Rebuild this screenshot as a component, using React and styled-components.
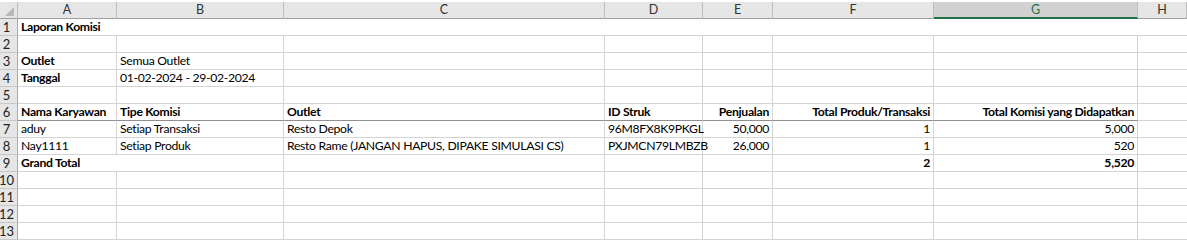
import React from "react";
import styled, { createGlobalStyle } from "styled-components";

const GlobalStyle = createGlobalStyle`
  html, body {
    margin: 0;
    padding: 0;
    background: #ffffff;
  }
  body {
    font-family: Lato, "Liberation Sans", sans-serif;
    font-size: 13px;
    color: #000;
  }
`;

const COLS = ["A", "B", "C", "D", "E", "F", "G", "H"];
const SELECTED_COL = "G";

const Sheet = styled.div`
  display: grid;
  grid-template-columns: 18px 99px 167px 321px 98px 70px 161px 204px 1fr;
  grid-template-rows: 19px repeat(13, 17px);
  width: 1187px;
  height: 241px;
  overflow: hidden;
  background: #fff;
`;

const Corner = styled.div`
  position: relative;
  margin-top: 2px;
  background: #e6e6e6;
  border-right: 1px solid #bdbdbd;
  border-bottom: 1px solid #9e9e9e;
  &::after {
    content: "";
    position: absolute;
    right: 3px;
    bottom: 2px;
    width: 0;
    height: 0;
    border-left: 9px solid transparent;
    border-bottom: 9px solid #b8b8b8;
  }
`;

const ColHead = styled.div`
  margin-top: 2px;
  display: flex;
  align-items: center;
  justify-content: center;
  background: ${(p) => (p.$selected ? "#d2d2d2" : "#e6e6e6")};
  border-right: 1px solid #bdbdbd;
  border-bottom: ${(p) => (p.$selected ? "2px solid #217346" : "1px solid #9e9e9e")};
  color: ${(p) => (p.$selected ? "#217346" : "#333")};
  font-size: 12.5px;
  line-height: 1;
  padding-top: 1px;
`;

const RowHead = styled.div`
  display: flex;
  align-items: center;
  justify-content: center;
  padding-right: 4px;
  background: #e6e6e6;
  border-right: 1px solid #ababab;
  border-bottom: 1px solid #c8c8c8;
  color: #222;
  font-size: 13px;
`;

const Cell = styled.div`
  display: flex;
  align-items: center;
  justify-content: ${(p) => (p.$align === "right" ? "flex-end" : "flex-start")};
  padding: 0 3px;
  white-space: nowrap;
  overflow: visible;
  grid-column: ${(p) => (p.$span ? `span ${p.$span}` : "auto")};
  border-right: ${(p) => (p.$noRight ? "none" : "1px solid #d4d4d4")};
  border-bottom: 1px solid ${(p) => (p.$head ? "#8f8f8f" : "#d4d4d4")};
  font-size: 12.2px;
  letter-spacing: -0.3px;
  font-weight: ${(p) => (p.$bold ? 700 : 400)};
  line-height: 1;
`;

const rows = [
  [{ v: "Laporan Komisi", bold: true, span: 8 }],
  [],
  [{ v: "Outlet", bold: true }, { v: "Semua Outlet" }],
  [{ v: "Tanggal", bold: true }, { v: "01-02-2024 - 29-02-2024" }],
  [],
  [
    { v: "Nama Karyawan", bold: true, head: true },
    { v: "Tipe Komisi", bold: true, head: true },
    { v: "Outlet", bold: true, head: true },
    { v: "ID Struk", bold: true, head: true },
    { v: "Penjualan", bold: true, head: true, right: true },
    { v: "Total Produk/Transaksi", bold: true, head: true, right: true },
    { v: "Total Komisi yang Didapatkan", bold: true, head: true, right: true },
  ],
  [
    { v: "aduy" },
    { v: "Setiap Transaksi" },
    { v: "Resto Depok" },
    { v: "96M8FX8K9PKGL" },
    { v: "50,000", right: true },
    { v: "1", right: true },
    { v: "5,000", right: true },
  ],
  [
    { v: "Nay1111" },
    { v: "Setiap Produk" },
    { v: "Resto Rame (JANGAN HAPUS, DIPAKE SIMULASI CS)" },
    { v: "PXJMCN79LMBZB" },
    { v: "26,000", right: true },
    { v: "1", right: true },
    { v: "520", right: true },
  ],
  [
    { v: "Grand Total", bold: true, span: 2 },
    {},
    {},
    {},
    { v: "2", bold: true, right: true },
    { v: "5,520", bold: true, right: true },
  ],
  [],
  [],
  [],
  [],
];

function fillRow(cells) {
  const out = [...cells];
  const used = out.reduce((n, c) => n + (c.span || 1), 0);
  for (let i = used; i < COLS.length; i++) out.push({});
  return out;
}

export default function App() {
  return (
    <>
      <GlobalStyle />
      <Sheet>
        <Corner />
        {COLS.map((c) => (
          <ColHead key={c} $selected={c === SELECTED_COL}>
            {c}
          </ColHead>
        ))}
        {rows.map((cells, r) => {
          const filled = fillRow(cells);
          return (
            <React.Fragment key={r}>
              <RowHead>{r + 1}</RowHead>
              {filled.map((c, i) => (
                <Cell
                  key={i}
                  $bold={c.bold}
                  $head={c.head}
                  $span={c.span}
                  $noRight={i === filled.length - 1}
                  $align={c.right ? "right" : "left"}
                >
                  {c.v}
                </Cell>
              ))}
            </React.Fragment>
          );
        })}
      </Sheet>
    </>
  );
}
